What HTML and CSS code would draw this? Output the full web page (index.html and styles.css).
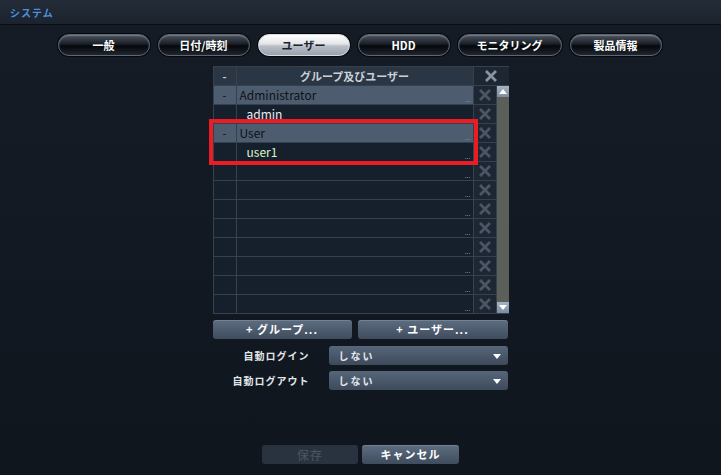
FILE: index.html
```html
<!DOCTYPE html>
<html lang="ja">
<head>
    <meta charset="UTF-8">
    <title>システム</title>
    <link rel="stylesheet" href="styles.css">
</head>
<body>

    <div class="title-bar">システム</div>

    <div class="tabs">
        <div class="tab">一般</div>
        <div class="tab">日付/時刻</div>
        <div class="tab active">ユーザー</div>
        <div class="tab">HDD</div>
        <div class="tab wide">モニタリング</div>
        <div class="tab">製品情報</div>
    </div>

    <div class="panel">
        <div class="user-table">
            <div class="cell head">-</div>
            <div class="cell head">グループ及びユーザー</div>
            <div class="cell head del span2"><svg viewBox="0 0 16 16"><path d="M3 3 L13 13 M13 3 L3 13"/></svg></div>

            <div class="cell group">-</div>
            <div class="cell group name">Administrator</div>
            <div class="cell del"><svg viewBox="0 0 16 16"><path d="M3 3 L13 13 M13 3 L3 13"/></svg></div>
            <div class="scrollbar">
                <div class="arrow up"></div>
                <div class="track"></div>
                <div class="arrow down"></div>
            </div>

            <div class="cell"></div>
            <div class="cell name user">admin</div>
            <div class="cell del"><svg viewBox="0 0 16 16"><path d="M3 3 L13 13 M13 3 L3 13"/></svg></div>

            <div class="cell group">-</div>
            <div class="cell group name">User</div>
            <div class="cell del"><svg viewBox="0 0 16 16"><path d="M3 3 L13 13 M13 3 L3 13"/></svg></div>

            <div class="cell"></div>
            <div class="cell name user current">user1</div>
            <div class="cell del"><svg viewBox="0 0 16 16"><path d="M3 3 L13 13 M13 3 L3 13"/></svg></div>

            <div class="cell"></div><div class="cell name"></div><div class="cell del"><svg viewBox="0 0 16 16"><path d="M3 3 L13 13 M13 3 L3 13"/></svg></div>
            <div class="cell"></div><div class="cell name"></div><div class="cell del"><svg viewBox="0 0 16 16"><path d="M3 3 L13 13 M13 3 L3 13"/></svg></div>
            <div class="cell"></div><div class="cell name"></div><div class="cell del"><svg viewBox="0 0 16 16"><path d="M3 3 L13 13 M13 3 L3 13"/></svg></div>
            <div class="cell"></div><div class="cell name"></div><div class="cell del"><svg viewBox="0 0 16 16"><path d="M3 3 L13 13 M13 3 L3 13"/></svg></div>
            <div class="cell"></div><div class="cell name"></div><div class="cell del"><svg viewBox="0 0 16 16"><path d="M3 3 L13 13 M13 3 L3 13"/></svg></div>
            <div class="cell"></div><div class="cell name"></div><div class="cell del"><svg viewBox="0 0 16 16"><path d="M3 3 L13 13 M13 3 L3 13"/></svg></div>
            <div class="cell"></div><div class="cell name"></div><div class="cell del"><svg viewBox="0 0 16 16"><path d="M3 3 L13 13 M13 3 L3 13"/></svg></div>
            <div class="cell"></div><div class="cell name"></div><div class="cell del"><svg viewBox="0 0 16 16"><path d="M3 3 L13 13 M13 3 L3 13"/></svg></div>

            <div class="highlight"></div>
        </div>

        <div class="add-row">
            <div class="btn add-group">+ グループ...</div>
            <div class="btn add-user">+ ユーザー...</div>
        </div>

        <div class="field">
            <span class="label">自動ログイン</span>
            <div class="select">しない</div>
        </div>
        <div class="field">
            <span class="label">自動ログアウト</span>
            <div class="select">しない</div>
        </div>
    </div>

    <div class="footer">
        <div class="btn save">保存</div>
        <div class="btn cancel">キャンセル</div>
    </div>

</body>
</html>
```

FILE: styles.css
```css
body {
    margin: 0;
    width: 721px;
    height: 475px;
    overflow: hidden;
    background: linear-gradient(#151c26, #10161e);
    font-family: "Noto Sans CJK JP", "Noto Sans", sans-serif;
    color: #e4e8ec;
}

.title-bar {
    height: 24px;
    line-height: 26px;
    padding-left: 10px;
    background: linear-gradient(#232c38, #1b232e);
    border-bottom: 1px solid #0a0f15;
    color: #4d8fdc;
    font-size: 10px;
    font-weight: bold;
    letter-spacing: 1px;
}

/* tabs */
.tabs {
    display: flex;
    justify-content: center;
    gap: 8px;
    margin-top: 9px;
    padding-right: 2px;
}
.tab {
    width: 90px;
    height: 20px;
    line-height: 20px;
    text-align: center;
    font-size: 11px;
    font-weight: bold;
    color: #fff;
    border: 1px solid #5d6672;
    border-radius: 11px;
    background: linear-gradient(#4b535f, #1a1f26 45%, #05080b 55%, #20262e);
    box-shadow: inset 0 1px 1px rgba(255, 255, 255, 0.25), 0 0 0 1px #05080c;
}
.tab.wide {
    width: 102px;
}
.tab.active {
    color: #1a2330;
    border-color: #d8dce0;
    background: linear-gradient(#ffffff, #e2e5e9 45%, #b9bec6 55%, #9ba2ac);
}

/* user table */
.panel {
    width: 296px;
    margin: 10px auto 0;
}
.user-table {
    position: relative;
    display: grid;
    grid-template-columns: 22px 236px 22px 12px;
    grid-auto-rows: 18px;
    gap: 1px;
    padding: 1px;
    background: #36414f;
}
.cell {
    position: relative;
    background: #16202c;
    font-size: 11px;
    line-height: 18px;
    text-align: center;
    color: #d4dae0;
}
.cell.head {
    background: #2a3644;
    font-weight: bold;
    color: #c9d0d8;
}
.cell.span2 {
    grid-column: span 2;
}
.cell.group {
    background: #4d5c6e;
    color: #0c121a;
}
.cell.name {
    text-align: left;
    padding-left: 3px;
    font-size: 12px;
}
.cell.name::after {
    content: "...";
    position: absolute;
    right: 2px;
    bottom: 3px;
    font-size: 7px;
    line-height: 4px;
    color: #8391a2;
}
.cell.user {
    padding-left: 10px;
    color: #e8ecf0;
}
.cell.current {
    color: #d6f4c6;
}
.cell.del {
    background: #1c2733;
}
.cell.del svg {
    width: 16px;
    height: 16px;
    margin-top: 1px;
}
.cell.del path {
    stroke: #4a5666;
    stroke-width: 2.8;
    fill: none;
}
.cell.head.del path {
    stroke: #8a939e;
}

.scrollbar {
    grid-column: 4;
    grid-row: 2 / span 12;
    display: flex;
    flex-direction: column;
    background: #5b5f5a;
}
.track {
    flex: 1;
}
.arrow {
    height: 11px;
    background: linear-gradient(#a6b3c4, #7d8ca0);
    position: relative;
}
.arrow::after {
    content: "";
    position: absolute;
    left: 2px;
    border-left: 4px solid transparent;
    border-right: 4px solid transparent;
}
.arrow.up::after {
    top: 3px;
    border-bottom: 5px solid #fff;
}
.arrow.down::after {
    top: 3px;
    border-top: 5px solid #fff;
}

.highlight {
    position: absolute;
    left: -4px;
    top: 53px;
    width: 261px;
    height: 38px;
    border: 4px solid #ec1c24;
}

/* buttons */
.btn {
    height: 19px;
    line-height: 19px;
    text-align: center;
    font-size: 11px;
    font-weight: bold;
    color: #fff;
    border-radius: 3px;
    background: linear-gradient(#5d6d80, #3e4c5d);
    box-shadow: inset 0 1px 0 rgba(255, 255, 255, 0.15);
    letter-spacing: 1px;
}
.add-row {
    display: flex;
    gap: 6px;
    margin-top: 6px;
}
.add-group {
    width: 139px;
}
.add-user {
    width: 150px;
}

.field {
    display: flex;
    align-items: center;
    margin-top: 7px;
}
.field + .field {
    margin-top: 6px;
}
.label {
    width: 97px;
    margin-right: 19px;
    text-align: right;
    font-size: 10px;
    font-weight: bold;
    letter-spacing: 1px;
    color: #e2e6ea;
}
.select {
    position: relative;
    width: 169px;
    height: 19px;
    line-height: 19px;
    padding-left: 10px;
    border-radius: 3px;
    background: linear-gradient(#566679, #3d4a5b);
    font-size: 10px;
    font-weight: bold;
    letter-spacing: 2px;
}
.select::after {
    content: "";
    position: absolute;
    right: 7px;
    top: 8px;
    border-left: 4px solid transparent;
    border-right: 4px solid transparent;
    border-top: 5px solid #fff;
}

.footer {
    display: flex;
    justify-content: center;
    gap: 4px;
    margin-top: 55px;
}
.save {
    width: 96px;
    color: #4b5765;
    background: #29333f;
    box-shadow: none;
    font-weight: normal;
    font-size: 12px;
}
.cancel {
    width: 97px;
}
```
